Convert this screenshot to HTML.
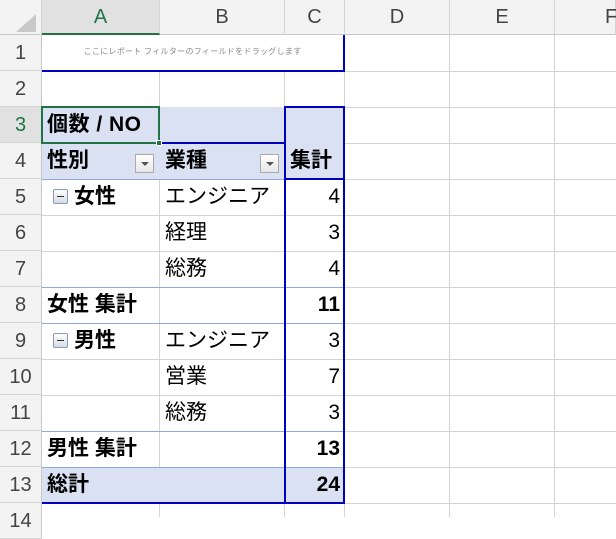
<!DOCTYPE html><html><head><meta charset="utf-8"><style>
*{margin:0;padding:0;box-sizing:border-box}
body{width:616px;height:517px;overflow:hidden;background:#fff;position:relative;font-family:"Liberation Sans","Noto Sans CJK JP",sans-serif}
div{position:absolute}
.vl{width:1px;background:#d4d4d4}
.hl{height:1px;background:#d4d4d4}
.ch{top:0;height:35px;background:#f3f3f3;border-right:1px solid #d4d4d4;border-bottom:1px solid #c8c8c8;text-align:center;line-height:35px;font-size:20px;color:#444}
.rh{left:0;width:42px;height:36px;background:#f3f3f3;border-bottom:1px solid #d4d4d4;border-right:1px solid #c8c8c8;text-align:center;line-height:36px;font-size:20px;color:#444}
.t{font-size:21px;line-height:36px;height:36px;color:#000;white-space:nowrap}
.b{font-weight:bold}
.n{text-align:right;width:56px;left:284px}
.pl{height:1px;background:#8ea9db;left:42px;width:302px}
.dd{width:19px;height:19px;border:1px solid #aaa;background:linear-gradient(#fff,#e6e6e6)}
.dd:after{content:"";position:absolute;left:5px;top:7px;border-left:4px solid transparent;border-right:4px solid transparent;border-top:4px solid #555}
.mn{width:15px;height:15px;border:1px solid #8a9ab5;background:linear-gradient(#fff,#d6dbe5);border-radius:2px}
.mn:after{content:"";position:absolute;left:3px;top:6px;width:7px;height:1px;background:#333}
</style></head><body>
<!-- gridlines -->
<div class="vl" style="left:159px;top:35px;height:482px"></div>
<div class="vl" style="left:284px;top:35px;height:482px"></div>
<div class="vl" style="left:344px;top:35px;height:482px"></div>
<div class="vl" style="left:449px;top:35px;height:482px"></div>
<div class="vl" style="left:554px;top:35px;height:482px"></div>
<div class="hl" style="left:42px;top:71px;width:574px"></div>
<div class="hl" style="left:42px;top:107px;width:574px"></div>
<div class="hl" style="left:344px;top:143px;width:272px"></div>
<div class="hl" style="left:344px;top:179px;width:272px"></div>
<div class="hl" style="left:42px;top:215px;width:574px"></div>
<div class="hl" style="left:42px;top:251px;width:574px"></div>
<div class="hl" style="left:344px;top:287px;width:272px"></div>
<div class="hl" style="left:344px;top:323px;width:272px"></div>
<div class="hl" style="left:42px;top:359px;width:574px"></div>
<div class="hl" style="left:42px;top:395px;width:574px"></div>
<div class="hl" style="left:344px;top:431px;width:272px"></div>
<div class="hl" style="left:344px;top:467px;width:272px"></div>
<div class="hl" style="left:42px;top:503px;width:574px"></div>
<!-- fills -->
<div style="left:42px;top:107px;width:302px;height:72px;background:#d9e1f2"></div>
<div style="left:42px;top:467px;width:302px;height:36px;background:#d9e1f2"></div>
<!-- pivot lines -->
<div class="pl" style="top:179px"></div>
<div class="pl" style="top:287px"></div>
<div class="pl" style="top:323px"></div>
<div class="pl" style="top:431px"></div>
<div class="pl" style="top:467px"></div>
<div style="left:159px;top:142px;width:127px;height:2px;background:#0000c0"></div>
<!-- headers -->
<div class="ch" style="left:0;width:42px;background:#f3f3f3"></div>
<div style="left:16px;top:14px;width:0;height:0;border-left:20px solid transparent;border-bottom:18px solid #c9c9c9"></div>
<div class="ch" style="left:42px;width:118px;background:#e1e1e1;border-bottom:2px solid #217346;color:#217346">A</div>
<div class="ch" style="left:160px;width:125px">B</div>
<div class="ch" style="left:285px;width:60px">C</div>
<div class="ch" style="left:345px;width:105px">D</div>
<div class="ch" style="left:450px;width:105px">E</div>
<div class="ch" style="left:555px;width:61px;text-align:left;padding-left:50px">F</div>
<div class="rh" style="top:35px">1</div>
<div class="rh" style="top:71px">2</div>
<div class="rh" style="top:107px;background:#e1e1e1;color:#217346">3</div>
<div class="rh" style="top:143px">4</div>
<div class="rh" style="top:179px">5</div>
<div class="rh" style="top:215px">6</div>
<div class="rh" style="top:251px">7</div>
<div class="rh" style="top:287px">8</div>
<div class="rh" style="top:323px">9</div>
<div class="rh" style="top:359px">10</div>
<div class="rh" style="top:395px">11</div>
<div class="rh" style="top:431px">12</div>
<div class="rh" style="top:467px">13</div>
<div class="rh" style="top:503px">14</div>
<!-- row1 filter box -->
<div style="left:42px;top:35px;width:303px;height:37px;border-right:2px solid #0000c0;border-bottom:2px solid #0000c0;background:#fff;text-align:center;font-size:8px;line-height:34px;color:#888;letter-spacing:0.3px">ここにレポート フィルターのフィールドをドラッグします</div>
<!-- blue box C -->
<div style="left:284px;top:106px;width:61px;height:398px;border:2px solid #0000c0"></div>
<div style="left:42px;top:502px;width:303px;height:2px;background:#0000c0"></div>
<div style="left:284px;top:178px;width:61px;height:2px;background:#0000c0"></div>
<!-- selected A3 -->
<div style="left:41px;top:106px;width:119px;height:38px;border:2px solid #217346"></div>
<div style="left:156px;top:140px;width:6px;height:6px;background:#217346;border:1px solid #fff"></div>
<!-- text -->
<div class="t b" style="left:47px;top:107px;letter-spacing:0.5px">個数 / NO</div>
<div class="t b" style="left:47px;top:143px">性別</div>
<div class="dd" style="left:135px;top:154px"></div>
<div class="t b" style="left:165px;top:143px">業種</div>
<div class="dd" style="left:260px;top:154px"></div>
<div class="t b" style="left:290px;top:143px">集計</div>
<div class="mn" style="left:53px;top:189px"></div>
<div class="t b" style="left:74px;top:179px">女性</div>
<div class="t" style="left:165px;top:179px">エンジニア</div>
<div class="t n" style="top:179px">4</div>
<div class="t" style="left:165px;top:215px">経理</div>
<div class="t n" style="top:215px">3</div>
<div class="t" style="left:165px;top:251px">総務</div>
<div class="t n" style="top:251px">4</div>
<div class="t b" style="left:47px;top:287px">女性 集計</div>
<div class="t n b" style="top:287px">11</div>
<div class="mn" style="left:53px;top:333px"></div>
<div class="t b" style="left:74px;top:323px">男性</div>
<div class="t" style="left:165px;top:323px">エンジニア</div>
<div class="t n" style="top:323px">3</div>
<div class="t" style="left:165px;top:359px">営業</div>
<div class="t n" style="top:359px">7</div>
<div class="t" style="left:165px;top:395px">総務</div>
<div class="t n" style="top:395px">3</div>
<div class="t b" style="left:47px;top:431px">男性 集計</div>
<div class="t n b" style="top:431px">13</div>
<div class="t b" style="left:47px;top:467px">総計</div>
<div class="t n b" style="top:467px">24</div>
</body></html>
